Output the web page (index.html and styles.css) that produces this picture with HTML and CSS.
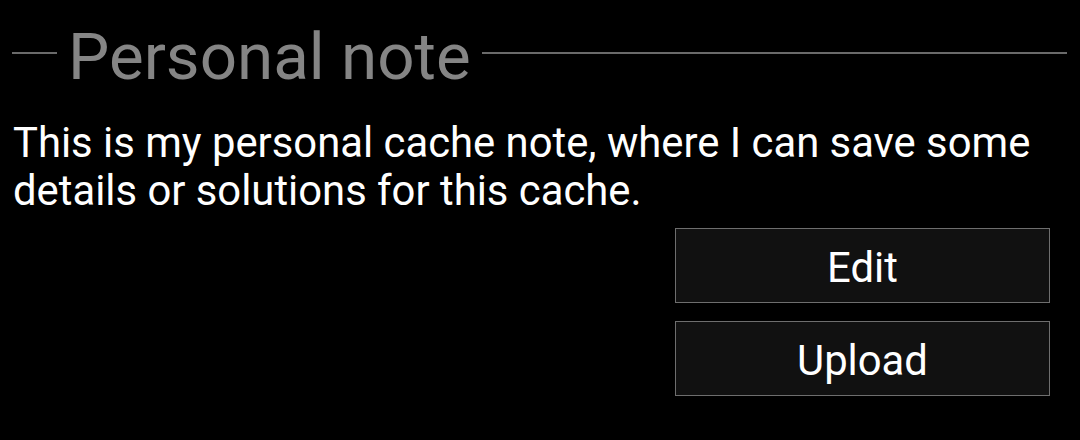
FILE: index.html
```html
<!DOCTYPE html>
<html>
<head>
<meta charset="utf-8">
<link rel="stylesheet" href="styles.css">
</head>
<body>
<div class="panel">
  <div class="header">
    <span class="line-left"></span>
    <span class="title">Personal note</span>
    <span class="line-right"></span>
  </div>
  <p class="note">This is my personal cache note, where I can save some details or solutions for this cache.</p>
  <div class="actions">
    <button class="btn">Edit</button>
    <button class="btn">Upload</button>
  </div>
</div>
</body>
</html>
```
FILE: styles.css
```css
html, body {
  margin: 0;
  padding: 0;
  background: #000;
  width: 1080px;
  height: 440px;
  overflow: hidden;
}
body {
  font-family: Roboto, "Noto Sans", sans-serif;
}
.panel {
  display: flex;
  flex-direction: column;
  padding: 16px 13px 0 12px;
}
.header {
  display: flex;
  align-items: center;
  height: 74px;
}
.line-left {
  width: 45px;
  height: 2px;
  background: #6a6a6a;
}
.line-right {
  flex: 1;
  height: 2px;
  background: #6a6a6a;
}
.title {
  font-size: 65.5px;
  line-height: 74px;
  color: #858585;
  padding: 0 11px 0 11px;
  position: relative;
  top: 4px;
}
.note {
  margin: 29px 0 0 1px;
  font-size: 41.8px;
  line-height: 48px;
  color: #fff;
}
.actions {
  display: flex;
  flex-direction: column;
  align-items: flex-end;
  gap: 18px;
  margin-top: 13px;
  padding-right: 17px;
}
.btn {
  width: 375px;
  height: 75px;
  background: #111;
  border: 1px solid #6e6e6e;
  color: #fff;
  font-family: Roboto, "Noto Sans", sans-serif;
  font-size: 41.8px;
  padding: 4px 0 0;
}
```
